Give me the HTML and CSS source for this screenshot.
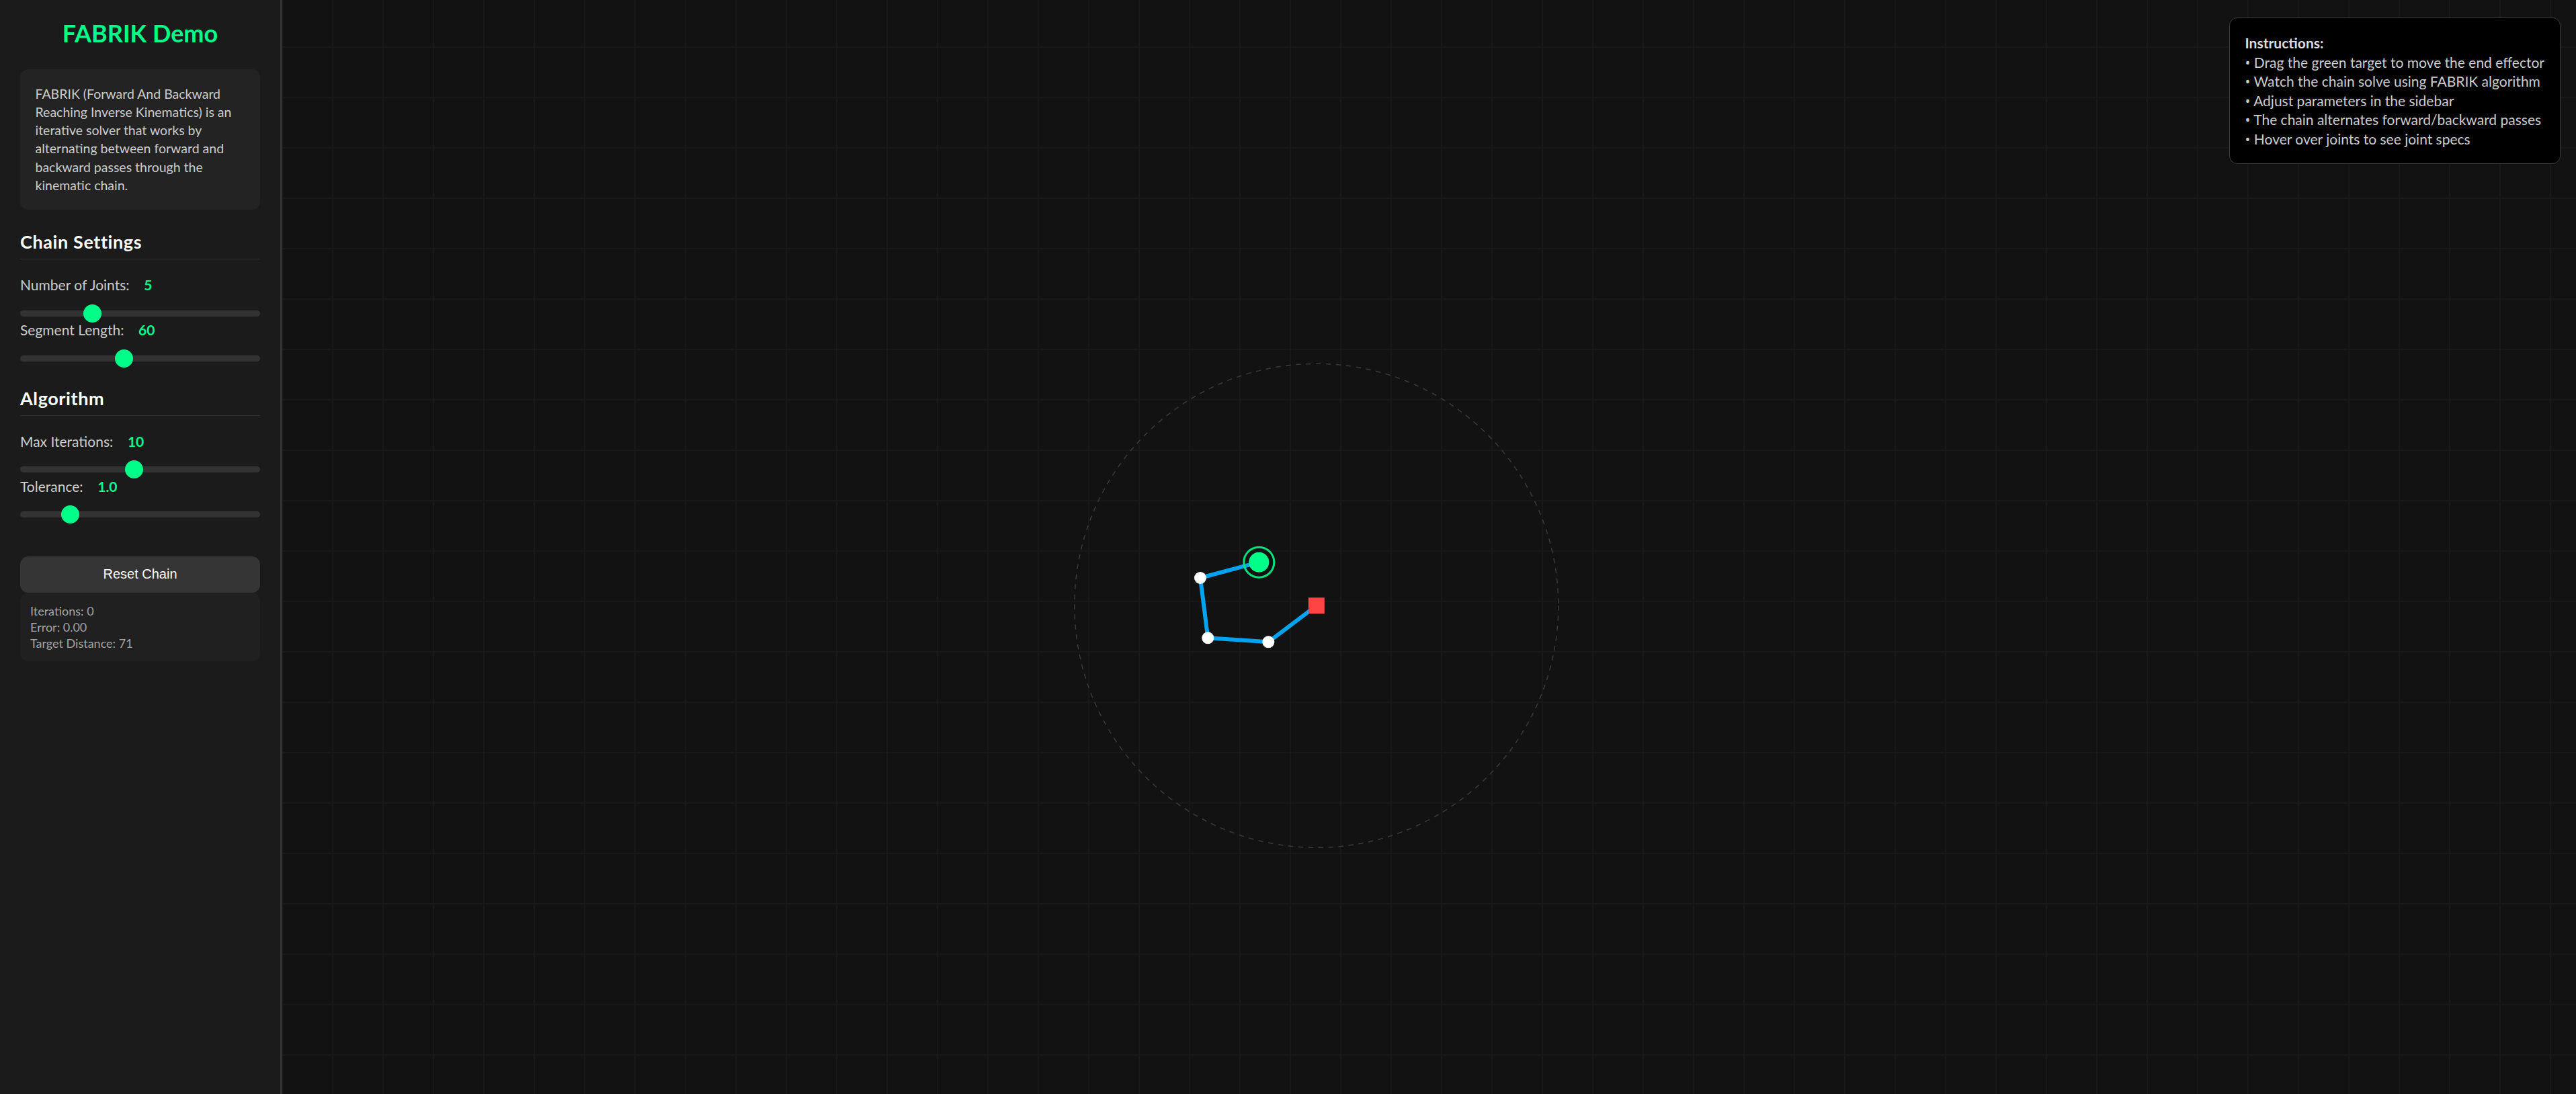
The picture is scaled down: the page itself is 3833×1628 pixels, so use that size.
FILE: index.html
```html
<!DOCTYPE html>
<html lang="en">
<head>
<meta charset="utf-8">
<title>FABRIK Demo</title>
<link rel="stylesheet" href="styles.css">
</head>
<body>
<div class="app">
  <aside class="sidebar">
    <h1 class="title">FABRIK Demo</h1>
    <div class="info-card">FABRIK (Forward And Backward Reaching Inverse Kinematics) is an iterative solver that works by alternating between forward and backward passes through the kinematic chain.</div>

    <section class="section">
      <h2 class="section-title">Chain Settings</h2>
      <div class="control">
        <label class="control-label">Number of Joints:<span class="value">5</span></label>
        <input class="slider" type="range" min="3" max="10" step="1" value="5">
      </div>
      <div class="control">
        <label class="control-label">Segment Length:<span class="value">60</span></label>
        <input class="slider" type="range" min="30" max="100" step="1" value="60">
      </div>
    </section>

    <section class="section">
      <h2 class="section-title">Algorithm</h2>
      <div class="control">
        <label class="control-label">Max Iterations:<span class="value">10</span></label>
        <input class="slider" type="range" min="1" max="20" step="1" value="10">
      </div>
      <div class="control">
        <label class="control-label">Tolerance:<span class="value">1.0</span></label>
        <input class="slider" type="range" min="0.1" max="5" step="0.1" value="1.0">
      </div>
    </section>

    <button class="reset-btn" type="button">Reset Chain</button>
    <div class="stats">
      <div>Iterations: 0</div>
      <div>Error: 0.00</div>
      <div>Target Distance: 71</div>
    </div>
  </aside>

  <main class="stage">
    <svg class="scene" width="3413" height="1628" viewBox="0 0 3413 1628" aria-hidden="true">
      <circle class="reach" cx="1538.8" cy="901.3" r="360"></circle>
      <polyline class="bones" points="1538.8,901.3 1467.3,955.3 1377.3,949.3 1366,860 1453.3,836.7"></polyline>
      <rect class="base" x="1526.8" y="889.3" width="24" height="24"></rect>
      <circle class="joint" cx="1467.3" cy="955.3" r="9"></circle>
      <circle class="joint" cx="1377.3" cy="949.3" r="9"></circle>
      <circle class="joint" cx="1366" cy="860" r="9"></circle>
      <circle class="target-ring" cx="1453.3" cy="836.7" r="22.5"></circle>
      <circle class="target" cx="1453.3" cy="836.7" r="15"></circle>
    </svg>

    <div class="instructions">
      <div class="instructions-title">Instructions:</div>
      <div><span class="bullet">•</span> Drag the green target to move the end effector</div>
      <div><span class="bullet">•</span> Watch the chain solve using FABRIK algorithm</div>
      <div><span class="bullet">•</span> Adjust parameters in the sidebar</div>
      <div><span class="bullet">•</span> The chain alternates forward/backward passes</div>
      <div><span class="bullet">•</span> Hover over joints to see joint specs</div>
    </div>
  </main>
</div>
</body>
</html>
```

FILE: styles.css
```css
* {
  box-sizing: border-box;
}

html, body {
  margin: 0;
  padding: 0;
  height: 100%;
  background: #121212;
  overflow: hidden;
}

body {
  font-family: "Lato", "Open Sans", "Noto Sans", sans-serif;
  color: #cccccc;
}

.app {
  display: flex;
  height: 100vh;
}

/* ---------- Sidebar ---------- */
.sidebar {
  flex: 0 0 420px;
  width: 420px;
  height: 100%;
  padding: 0 30px;
  background: #1b1b1b;
  border-right: 3px solid #333333;
}

.title {
  margin: 27.5px 0 32.3px;
  font-size: 36px;
  line-height: 43.2px;
  font-weight: 700;
  color: #00ff88;
  text-align: center;
}

.info-card {
  margin: 0 0 32.3px;
  padding: 22.5px;
  background: #232323;
  border-radius: 12px;
  font-size: 19.5px;
  line-height: 27.3px;
  color: #cccccc;
}

.section + .section {
  margin-top: 38.85px;
}

.section-title {
  margin: 0 0 25.3px;
  padding-bottom: 8.4px;
  border-bottom: 1px solid #333333;
  font-size: 27px;
  line-height: 32.4px;
  font-weight: 700;
  letter-spacing: 0.6px;
  color: #ffffff;
}

.control + .control {
  margin-top: 7.7px;
}

.control-label {
  display: block;
  margin-bottom: 25.3px;
  font-size: 21px;
  line-height: 25.2px;
  color: #cccccc;
}

.value {
  margin-left: 21.6px;
  font-weight: 700;
  color: #00ff88;
}

.slider {
  -webkit-appearance: none;
  appearance: none;
  display: block;
  width: 100%;
  height: 9px;
  margin: 0;
  padding: 0;
  background: #333333;
  border-radius: 4.5px;
  outline: none;
}

.slider::-webkit-slider-thumb {
  -webkit-appearance: none;
  appearance: none;
  width: 27px;
  height: 27px;
  border: none;
  border-radius: 50%;
  background: #00ff88;
  cursor: pointer;
}

.reset-btn {
  display: block;
  width: 100%;
  margin-top: 57.85px;
  padding: 15px;
  border: none;
  border-radius: 12px;
  background: #353535;
  color: #ffffff;
  font-family: "Liberation Sans", Arial, sans-serif;
  font-size: 20px;
  line-height: 23.3px;
  cursor: pointer;
}

.stats {
  padding: 15px;
  background: #202020;
  border-radius: 12px;
  font-size: 18px;
  line-height: 24px;
  color: #a3a3a3;
}

/* ---------- Stage ---------- */
.stage {
  flex: 1 1 auto;
  position: relative;
  overflow: hidden;
  background-color: #121212;
  background-image:
    linear-gradient(to right, #181818 0, #181818 2px, transparent 2px),
    linear-gradient(to bottom, #181818 0, #181818 2px, transparent 2px);
  background-size: 75px 75px;
  background-position: -1px -6px;
}

.scene {
  position: absolute;
  top: 0;
  left: 0;
  display: block;
}

.reach {
  fill: none;
  stroke: #3a3a3a;
  stroke-width: 1.5;
  stroke-dasharray: 7.5 7.5;
}

.bones {
  fill: none;
  stroke: #00a3f0;
  stroke-width: 6;
  stroke-linejoin: round;
  stroke-linecap: round;
}

.base {
  fill: #ff4444;
}

.joint {
  fill: #ffffff;
}

.target-ring {
  fill: none;
  stroke: #00e07c;
  stroke-width: 3;
}

.target {
  fill: #00ff88;
}

.instructions {
  position: absolute;
  top: 25.5px;
  right: 23.5px;
  padding: 23.5px 22.5px 21.5px;
  background: #000000;
  border: 1px solid #3a3a3a;
  border-radius: 12px;
  font-size: 21px;
  line-height: 28.6px;
  color: #cccccc;
  white-space: nowrap;
}

.bullet {
  font-family: "Open Sans", "Noto Sans", sans-serif;
}

.instructions-title {
  font-weight: 700;
  color: #dddddd;
}
```
